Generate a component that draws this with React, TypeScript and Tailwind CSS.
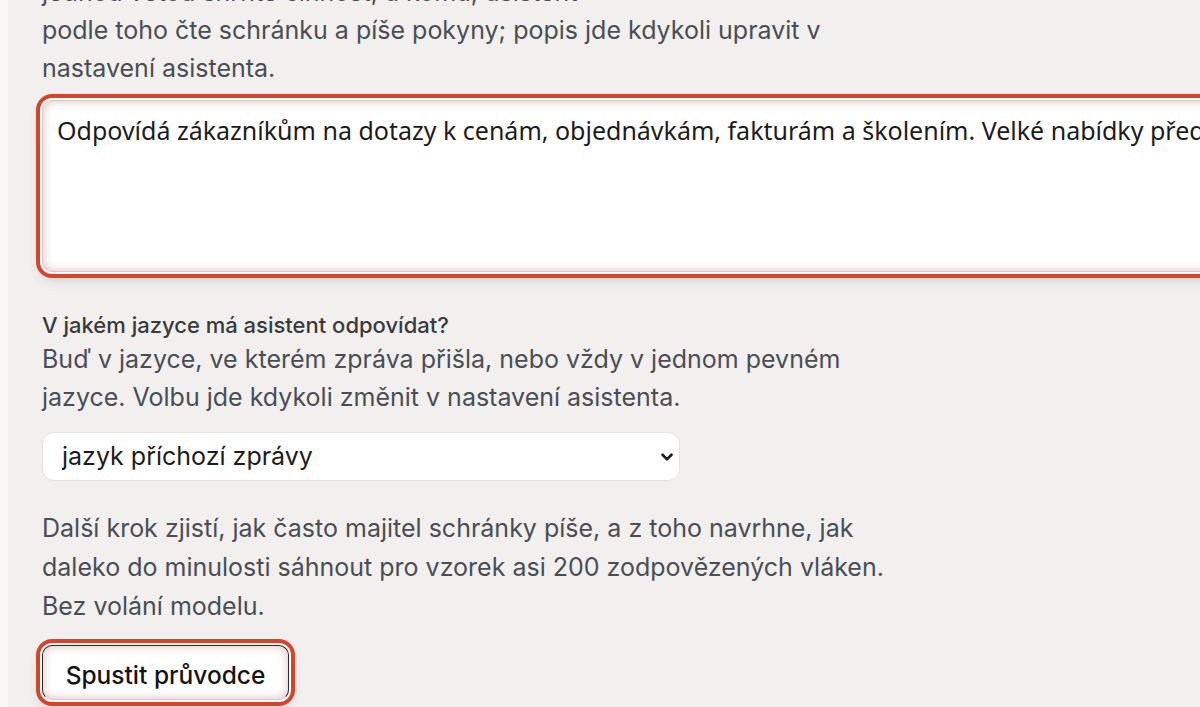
import { ChevronDown } from "lucide-react";

const RING =
	"shadow-[inset_0_0_10px_rgba(150,70,70,0.35),0_0_0_2px_#ffffff,0_0_0_6px_#d9432a,0_6px_14px_rgba(0,0,0,0.18)]";

export default function App() {
	return (
		<div className="flex min-h-[707px] w-full overflow-hidden bg-[#f1f0ee] font-['Inter',sans-serif]">
			<div className="w-2 shrink-0 bg-[#f8f8f7]" />

			<div className="flex min-w-0 flex-1 flex-col pl-[34px]">
				<p className="-mt-[27px] text-[25px] leading-[38px] text-[#4a4e54]">
					jednou větou shrňte činnost, a komu; asistent
					<br />
					podle toho čte schránku a píše pokyny; popis jde kdykoli upravit v
					<br />
					nastavení asistenta.
				</p>

				<textarea
					defaultValue="Odpovídá zákazníkům na dotazy k cenám, objednávkám, fakturám a školením. Velké nabídky předává obchodnímu oddělení."
					className={`mt-[13px] h-[172px] w-[1800px] shrink-0 resize-none rounded-[10px] border border-[#d9c9c6] bg-white px-[14px] py-[13px] font-['Noto_Sans',sans-serif] text-[25px] leading-8 text-[#1c1c1c] outline-none ${RING}`}
				/>

				<label className="mt-10 text-[22px] font-medium leading-[26px] text-[#3a3a3a]">
					V jakém jazyce má asistent odpovídat?
				</label>
				<p className="mt-[2px] text-[25px] leading-[38px] text-[#4a4e54]">
					Buď v jazyce, ve kterém zpráva přišla, nebo vždy v jednom pevném
					<br />
					jazyce. Volbu jde kdykoli změnit v nastavení asistenta.
				</p>

				<div className="relative mt-4 w-[638px]">
					<select className="h-[49px] w-full appearance-none rounded-xl border border-[#e3e2e0] bg-white pl-[19px] text-[25px] text-[#1c1c1c] outline-none">
						<option>jazyk příchozí zprávy</option>
						<option>čeština</option>
						<option>angličtina</option>
					</select>
					<ChevronDown
						className="pointer-events-none absolute right-[4px] top-1/2 size-[18px] -translate-y-1/2 text-[#1c1c1c]"
						strokeWidth={3.5}
					/>
				</div>

				<p className="mt-7 text-[25px] leading-[39px] text-[#4a4e54]">
					Další krok zjistí, jak často majitel schránky píše, a z toho navrhne, jak
					<br />
					daleko do minulosti sáhnout pro vzorek asi 200 zodpovězených vláken.
					<br />
					Bez volání modelu.
				</p>

				<div className="mt-[19px]">
					<button
						className={`h-[55px] w-[247px] rounded-[10px] border border-[#2b2b2b] border-b-[#d8c8c6] bg-white pt-[6px] text-[24.5px] font-medium text-[#141414] ${RING}`}
					>
						Spustit průvodce
					</button>
				</div>
			</div>
		</div>
	);
}
